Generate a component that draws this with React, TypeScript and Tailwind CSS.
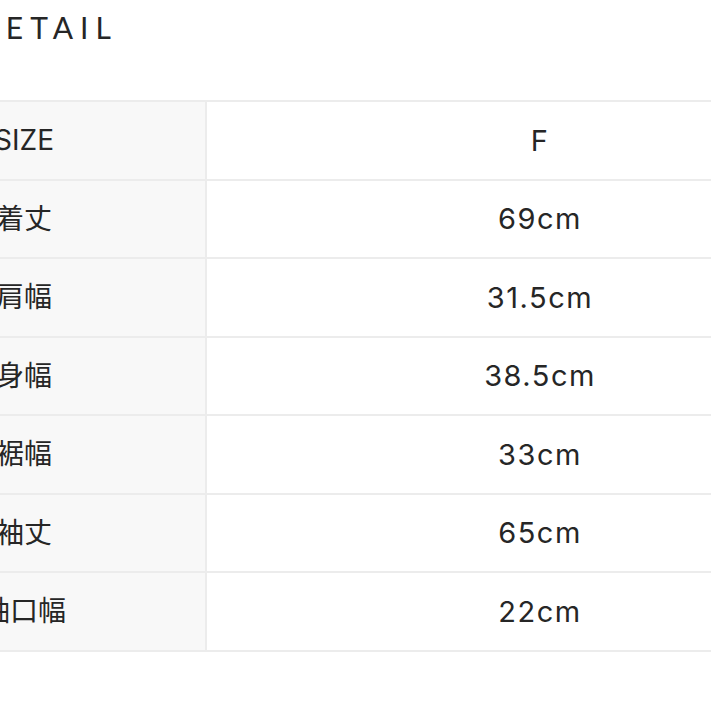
const rows: [string, string][] = [
  ["SIZE", "F"],
  ["着丈", "69cm"],
  ["肩幅", "31.5cm"],
  ["身幅", "38.5cm"],
  ["裾幅", "33cm"],
  ["袖丈", "65cm"],
  ["袖口幅", "22cm"],
];

export default function App() {
  return (
    <div className="h-[711px] w-[711px] overflow-hidden bg-white text-[#262626]">
      <h1
        className="ml-[-24px] pt-[8px] text-[30px] font-normal leading-[38px] tracking-[7px]"
        style={{ fontFamily: "Lato, 'Noto Sans CJK JP', sans-serif" }}
      >
        DETAIL
      </h1>

      <div className="mt-[54px] ml-[-157px] w-[1030px] border-t-2 border-[#ececec]">
        {rows.map(([label, value]) => (
          <div key={label} className="flex h-[78.5px] border-b-2 border-[#ececec]">
            <div
              className="flex w-[364px] items-center justify-center border-r-2 border-[#ececec] bg-[#f8f8f8] text-[28px]"
              style={{ fontFamily: "Inter, 'Noto Sans CJK JP', sans-serif" }}
            >
              {label}
            </div>
            <div
              className="flex flex-1 items-center justify-center text-[29px] tracking-[1.5px]"
              style={{ fontFamily: "Inter, 'Noto Sans CJK JP', sans-serif" }}
            >
              {value}
            </div>
          </div>
        ))}
      </div>
    </div>
  );
}
